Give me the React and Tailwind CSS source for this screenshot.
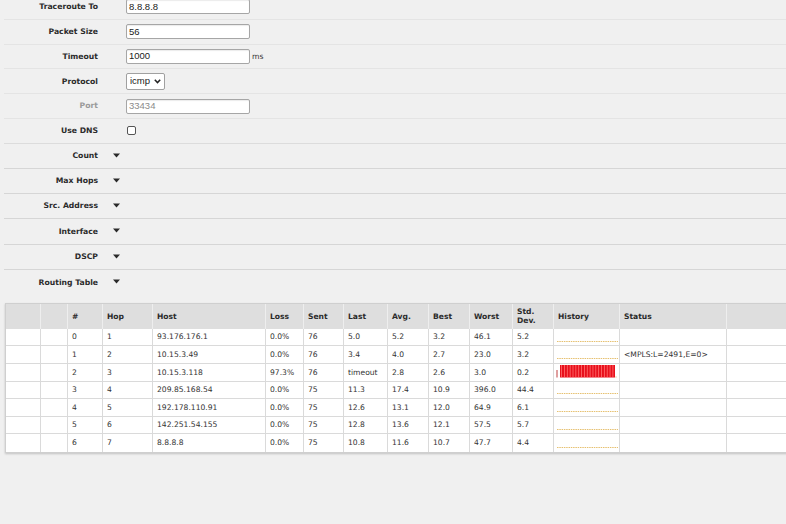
import React from "react";

const FONT = { fontFamily: '"DejaVu Sans", Verdana, sans-serif' };
const INFONT = { fontFamily: '"Liberation Sans", Arial, sans-serif' };

function Tri() {
  return (
    <svg width="7" height="5" viewBox="0 0 7 5" className="block">
      <polygon points="0,0.5 7,0.5 3.5,4.5" fill="#2a2a2a" />
    </svg>
  );
}

function Row({ label, children, gray, last }) {
  return (
    <div
      className={`ml-[4px] flex h-[24.8px] items-center ${last ? "border-b border-[#dcdcdc]" : "border-b border-[#e4e4e4]"}`}
    >
      <div
        className={`w-[94px] text-right text-[7.7px] font-bold ${gray ? "text-[#9a9a9a]" : "text-[#2b2b2b]"}`}
      >
        {label}
      </div>
      <div className="ml-[28px] flex items-center">{children}</div>
    </div>
  );
}

function Input({ value, gray }) {
  return (
    <div
      className={`flex h-[15px] w-[124px] items-center rounded-[2px] border border-[#a6a6a6] bg-white pl-[2px] text-[9.5px] shadow-[inset_0_1px_1px_rgba(0,0,0,0.08)] ${gray ? "text-[#8a8a8a]" : "text-[#1a1a1a]"}`}
      style={INFONT}
    >
      {value}
    </div>
  );
}

function Drop({ label, last }) {
  return (
    <div
      className={`ml-[4px] flex h-[25.2px] items-center ${last ? "" : "border-b border-[#d6d6d6]"}`}
    >
      <div className="w-[94px] text-right text-[7.7px] font-bold text-[#2b2b2b]">
        {label}
      </div>
      <div className="ml-[15px] -mt-[1px]">
        <Tri />
      </div>
    </div>
  );
}

const widths = [34.5, 27.5, 35, 50, 113, 38, 40, 44, 41, 41, 43, 41, 66, 107, 90];
const headers = ["", "", "#", "Hop", "Host", "Loss", "Sent", "Last", "Avg.", "Best", "Worst", "Std.\nDev.", "History", "Status", ""];

const rows = [
  ["0", "1", "93.176.176.1", "0.0%", "76", "5.0", "5.2", "3.2", "46.1", "5.2", "", ""],
  ["1", "2", "10.15.3.49", "0.0%", "76", "3.4", "4.0", "2.7", "23.0", "3.2", "", "<MPLS:L=2491,E=0>"],
  ["2", "3", "10.15.3.118", "97.3%", "76", "timeout", "2.8", "2.6", "3.0", "0.2", "red", ""],
  ["3", "4", "209.85.168.54", "0.0%", "75", "11.3", "17.4", "10.9", "396.0", "44.4", "", ""],
  ["4", "5", "192.178.110.91", "0.0%", "75", "12.6", "13.1", "12.0", "64.9", "6.1", "", ""],
  ["5", "6", "142.251.54.155", "0.0%", "75", "12.8", "13.6", "12.1", "57.5", "5.7", "", ""],
  ["6", "7", "8.8.8.8", "0.0%", "75", "10.8", "11.6", "10.7", "47.7", "4.4", "", ""],
];

function History({ red }) {
  const bars = [];
  if (red) {
    for (let i = 0; i < 19; i++) {
      bars.push(<rect key={i} x={7.2 + i * 2.85} y="1" width="0.8" height="12" fill="#ff7070" />);
    }
  }
  return (
    <svg width="64" height="17" viewBox="0 0 64 17" className="block">
      {red ? (
        <>
          <rect x="2.5" y="6" width="1" height="7.5" fill="#c04040" />
          <rect x="6" y="1" width="55" height="12.5" fill="#e8101c" />
          {bars}
          <rect x="61.5" y="12.5" width="1" height="1" fill="#d8b060" />
        </>
      ) : (
        <line x1="3" y1="12.5" x2="64" y2="12.5" stroke="#e6c070" strokeWidth="1" strokeDasharray="1.5 0.8" />
      )}
    </svg>
  );
}

export default function App() {
  return (
    <div className="min-h-screen w-full overflow-hidden bg-[#f0f0f0] text-[#2b2b2b]" style={FONT}>
      <div className="-mt-[5px]">
        <Row label="Traceroute To">
          <Input value="8.8.8.8" />
        </Row>
        <Row label="Packet Size">
          <Input value="56" />
        </Row>
        <Row label="Timeout">
          <Input value="1000" />
          <span className="ml-[2px] text-[7.7px] text-[#333]">ms</span>
        </Row>
        <Row label="Protocol">
          <div
            className="flex h-[17px] w-[39px] items-center rounded-[2px] border border-[#a0a0a0] bg-white pl-[3px] text-[9.5px] text-[#1a1a1a]"
            style={INFONT}
          >
            <span>icmp</span>
            <svg width="7" height="5" viewBox="0 0 7 5" className="ml-[4px]">
              <polyline points="0.8,0.8 3.5,3.6 6.2,0.8" fill="none" stroke="#222" strokeWidth="1.5" />
            </svg>
          </div>
        </Row>
        <Row label="Port" gray>
          <Input value="33434" gray />
        </Row>
        <Row label="Use DNS" last>
          <div className="ml-[1px] h-[9px] w-[9px] rounded-[2px] border border-[#555] bg-white" />
        </Row>
        <Drop label="Count" />
        <Drop label="Max Hops" />
        <Drop label="Src. Address" />
        <Drop label="Interface" />
        <Drop label="DSCP" />
        <Drop label="Routing Table" last />
      </div>

      <div className="ml-[5px] mt-[8px] w-[820px] border border-[#cfcfcf] bg-white shadow-[0_1px_2px_rgba(0,0,0,0.2)]">
        <div className="flex h-[25px] bg-[#dedede]">
          {headers.map((h, i) => (
            <div
              key={i}
              className="flex shrink-0 items-center whitespace-pre-line border-r border-[#eeeeee] pl-[4px] text-[7.6px] font-bold leading-[9px] text-[#2b2b2b]"
              style={{ width: widths[i] }}
            >
              {h}
            </div>
          ))}
        </div>
        {rows.map((r, ri) => (
          <div
            key={ri}
            className={`flex h-[17.57px] ${ri < rows.length - 1 ? "border-b border-[#dadada]" : ""}`}
          >
            {widths.map((w, ci) => {
              let content = null;
              if (ci >= 2 && ci <= 11) content = r[ci - 2];
              const isHist = ci === 12;
              const isStatus = ci === 13;
              return (
                <div
                  key={ci}
                  className={`flex shrink-0 items-center border-r border-[#dadada] text-[7.6px] text-[#333] ${isHist ? "pl-0" : "pl-[4px]"}`}
                  style={{ width: w }}
                >
                  {isHist ? <History red={r[10] === "red"} /> : isStatus ? r[11] : content}
                </div>
              );
            })}
          </div>
        ))}
      </div>
    </div>
  );
}
